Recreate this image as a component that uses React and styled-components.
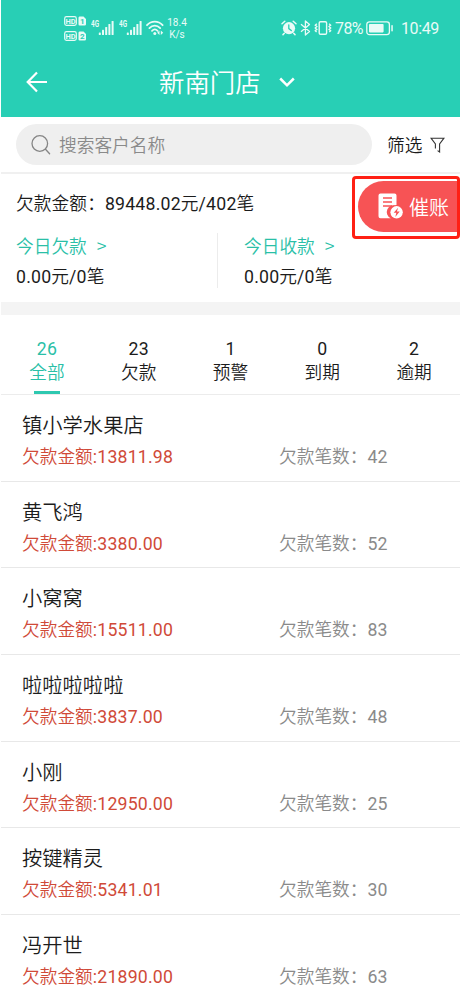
import React from "react";
import styled, { createGlobalStyle } from "styled-components";

const tabs = [
  { count: 26, label: "全部" },
  { count: 23, label: "欠款" },
  { count: 1, label: "预警" },
  { count: 0, label: "到期" },
  { count: 2, label: "逾期" },
];

const customers = [
  { name: "镇小学水果店", amount: "13811.98", bills: 42 },
  { name: "黄飞鸿", amount: "3380.00", bills: 52 },
  { name: "小窝窝", amount: "15511.00", bills: 83 },
  { name: "啦啦啦啦啦", amount: "3837.00", bills: 48 },
  { name: "小刚", amount: "12950.00", bills: 25 },
  { name: "按键精灵", amount: "5341.01", bills: 30 },
  { name: "冯开世", amount: "21890.00", bills: 63 },
];

const HdIcon = ({ sim }) => (
  <svg width="23" height="10" viewBox="0 0 23 10">
    <rect x="0.7" y="0.7" width="11.6" height="8.6" rx="1.8" fill="none" stroke="#e9fbf7" strokeWidth="1.2" />
    <text x="6.5" y="7.7" textAnchor="middle" fontSize="7.5" fontWeight="700" fill="#e9fbf7">
      HD
    </text>
    <path d="M15.5 0.5h4l2.5 2.5v5.2a1.3 1.3 0 0 1-1.3 1.3h-5a1.2 1.2 0 0 1-1.2-1.3V1.7a1.2 1.2 0 0 1 1-1.2z" fill="#e9fbf7" />
    <text x="18.2" y="8" textAnchor="middle" fontSize="8" fontWeight="700" fill="#28cfb5">
      {sim}
    </text>
  </svg>
);

const SignalIcon = () => (
  <svg width="24" height="18" viewBox="0 0 24 18" fill="#e9fbf7">
    <text x="0" y="7.5" fontSize="8.5" fontWeight="700" textLength="8" lengthAdjust="spacingAndGlyphs">
      4G
    </text>
    <rect x="7.8" y="13.5" width="2" height="2.5" rx="0.6" />
    <rect x="11" y="10.7" width="2" height="5.3" rx="0.6" />
    <rect x="14.2" y="8" width="2" height="8" rx="0.6" />
    <rect x="17.4" y="5" width="2" height="11" rx="0.6" />
    <rect x="20.6" y="2" width="2" height="14" rx="0.6" />
  </svg>
);

const WifiIcon = () => (
  <svg width="18" height="16" viewBox="0 0 18 16" fill="none" stroke="#e9fbf7" strokeWidth="1.8" strokeLinecap="round">
    <path d="M1 5.2C5.3 0.4 12.3 0.4 16.6 5.2" />
    <path d="M3.4 8.1C6.6 4.7 11 4.7 14.2 8.1" />
    <path d="M6 10.8C7.7 9.1 9.9 9.1 11.6 10.8" />
    <circle cx="8.8" cy="13.4" r="1.5" fill="#e9fbf7" stroke="none" />
    <path d="M13.5 10.6v4.4L11.2 12.8zM14.8 10.6v4.4L17.2 12.8z" fill="#e9fbf7" stroke="none" />
  </svg>
);

const AlarmIcon = () => (
  <svg width="16" height="16" viewBox="0 0 16 16" fill="none" stroke="#e9fbf7" strokeLinecap="round">
    <circle cx="8" cy="8.2" r="6.1" fill="#e9fbf7" stroke="none" />
    <path d="M1 3.7L3.8 1.2M15 3.7L12.2 1.2M3.3 13.3L2 14.6M12.7 13.3L14 14.6" strokeWidth="1.5" />
    <path d="M7.8 4.8v3.8l2.5 2" stroke="#28cfb5" strokeWidth="1.3" />
  </svg>
);

const BluetoothIcon = () => (
  <svg width="11" height="16" viewBox="0 0 11 16" fill="none" stroke="#e9fbf7" strokeWidth="1.3" strokeLinejoin="round">
    <path d="M1 4.3L9.5 11.6L5.4 15V1L9.5 4.4L1 11.7" />
  </svg>
);

const VibrateIcon = () => (
  <svg width="18" height="16" viewBox="0 0 18 16" fill="none" stroke="#e9fbf7" strokeWidth="1.4">
    <rect x="5.2" y="1.7" width="7.4" height="12.6" rx="1.3" />
    <path d="M2.8 3.8l-1.5 1.4l1.5 1.4l-1.5 1.4l1.5 1.4l-1.5 1.4l1.3 1.2M15.1 3.8l1.5 1.4l-1.5 1.4l1.5 1.4l-1.5 1.4l1.5 1.4l-1.3 1.2" />
  </svg>
);

const BatteryIcon = () => (
  <svg width="28" height="15" viewBox="0 0 28 15">
    <rect x="0.8" y="0.8" width="22.6" height="12.8" rx="2.6" fill="none" stroke="#e9fbf7" strokeWidth="1.3" />
    <rect x="3" y="3" width="14.6" height="8.4" rx="0.8" fill="#e9fbf7" />
    <rect x="25.3" y="4" width="1.5" height="6.4" rx="0.7" fill="#e9fbf7" />
  </svg>
);

const Money = ({ amount, bills }) => (
  <span>
    <Figures>{amount}</Figures>元<Figures>/{bills}</Figures>笔
  </span>
);

const App = () => {
  return (
    <>
      <GlobalStyle />
      <Page>
        <Header>
          <StatusBar>
            <HdStack>
              <HdIcon sim="1" />
              <HdIcon sim="2" />
            </HdStack>
            <Signals>
              <SignalIcon />
              <SignalIcon />
            </Signals>
            <WifiIcon />
            <Speed>
              <span>18.4</span>
              <span>K/s</span>
            </Speed>
            <StatusRight>
              <AlarmIcon />
              <BluetoothIcon />
              <VibrateIcon />
              <Percent>78%</Percent>
              <BatteryIcon />
              <Clock>10:49</Clock>
            </StatusRight>
          </StatusBar>
          <TitleBar>
            <svg width="22" height="22" viewBox="0 0 22 22" fill="none" stroke="#fff" strokeWidth="2.2">
              <path d="M11 1.5L1.7 11L11 20.5M1.7 11H21" />
            </svg>
            <Title>新南门店</Title>
            <svg width="16" height="11" viewBox="0 0 16 11" fill="none" stroke="#fff" strokeWidth="2.5">
              <path d="M1.2 1.5L8 8.3L14.8 1.5" />
            </svg>
          </TitleBar>
        </Header>
        <SearchRow>
          <SearchBox>
            <svg width="20" height="21" viewBox="0 0 20 21" fill="none" stroke="#858585" strokeWidth="1.3">
              <circle cx="8.8" cy="9.5" r="7.8" />
              <path d="M14.5 15.3L18.6 19.8" strokeLinecap="round" />
            </svg>
            <SearchHint>搜索客户名称</SearchHint>
          </SearchBox>
          <Filter>
            <span>筛选</span>
            <svg width="15" height="16" viewBox="0 0 15 16" fill="none" stroke="#333" strokeWidth="1.1">
              <path d="M5.4 11.5V7L1 1.2H14L9.6 7V15L7.6 13.6" />
            </svg>
          </Filter>
        </SearchRow>
        <Summary>
          <Total>
            欠款金额：
            <Money amount="89448.02" bills="402" />
          </Total>
          <Today>
            <TodayItem>
              <TodayLink>
                今日欠款<i>&gt;</i>
              </TodayLink>
              <Money amount="0.00" bills="0" />
            </TodayItem>
            <TodayItem $divided>
              <TodayLink>
                今日收款<i>&gt;</i>
              </TodayLink>
              <Money amount="0.00" bills="0" />
            </TodayItem>
          </Today>
          <Highlight>
            <DunButton>
              <svg width="26" height="27" viewBox="0 0 26 27">
                <path d="M2.5 0.5h14a2 2 0 0 1 2 2v10.3a6.8 6.8 0 0 0-5.7 12.5H2.5a2 2 0 0 1-2-2V2.5a2 2 0 0 1 2-2z" fill="#fff" />
                <path d="M5 5h9M5 9h9M5 13h9" stroke="#f75355" strokeWidth="1.5" />
                <circle cx="18.6" cy="19.3" r="7.4" fill="#f75355" />
                <circle cx="18.6" cy="19.3" r="6.2" fill="#fff" />
                <path d="M20.1 14.8L15.7 19.8h2.6l-1 4.2l4.4-5.4h-2.8z" fill="#f75355" />
              </svg>
              <span>催账</span>
            </DunButton>
          </Highlight>
        </Summary>
        <Tabs>
          {tabs.map((tab, index) => (
            <Tab key={tab.label} $active={index === 0}>
              <Figures>{tab.count}</Figures>
              <span>{tab.label}</span>
            </Tab>
          ))}
        </Tabs>
        {customers.map((customer) => (
          <Customer key={customer.name}>
            <Name>{customer.name}</Name>
            <Details>
              <Amount>
                欠款金额<Figures>:{customer.amount}</Figures>
              </Amount>
              <Bills>
                欠款笔数：<Figures>{customer.bills}</Figures>
              </Bills>
            </Details>
          </Customer>
        ))}
      </Page>
    </>
  );
};

const GlobalStyle = createGlobalStyle`
  * {
    box-sizing: border-box;
  }
  body {
    margin: 0;
    background: #fff;
    overflow: hidden;
    font-family: Roboto, "Noto Sans CJK SC", sans-serif;
    font-weight: 350;
  }
  svg {
    display: block;
    flex-shrink: 0;
  }
`;

const Page = styled.main`
  width: 460px;
  height: 992px;
  padding-left: 1px;
  overflow: hidden;
  font-size: 17.7px;
  line-height: 26px;
  color: #1c1c1c;
  white-space: nowrap;
`;

const Header = styled.header`
  height: 117px;
  background: #28cfb5;
  color: #fff;
`;

const StatusBar = styled.div`
  display: flex;
  align-items: center;
  height: 56px;
  padding: 0 21px 0 63px;
  color: #e9fbf7;
  font-weight: 400;
`;

const HdStack = styled.div`
  display: flex;
  flex-direction: column;
  gap: 5px;
`;

const Signals = styled.div`
  display: flex;
  gap: 4px;
  margin: 0 3px 0 4px;
`;

const Speed = styled.div`
  display: flex;
  flex-direction: column;
  align-items: center;
  width: 20px;
  margin-left: 3px;
  padding-top: 1px;
  font-size: 10px;
  line-height: 12px;
`;

const StatusRight = styled.div`
  display: flex;
  align-items: center;
  margin-left: auto;
  gap: 3px;
`;

const Percent = styled.span`
  width: 28px;
  padding-top: 2px;
  font-size: 16px;
  letter-spacing: -0.6px;
`;

const Clock = styled.span`
  width: 38px;
  margin-left: 4px;
  padding-top: 2px;
  font-size: 16px;
  letter-spacing: -0.4px;
`;

const TitleBar = styled.div`
  display: flex;
  align-items: center;
  height: 52px;
  padding-left: 25px;
`;

const Title = styled.h1`
  margin: 0 18px 0 111px;
  padding-top: 2px;
  font-size: 25.4px;
  font-weight: 350;
  line-height: 38px;
`;

const SearchRow = styled.div`
  display: flex;
  align-items: center;
  height: 57px;
  padding-left: 15px;
  border-bottom: 2px solid #f0f0f0;
`;

const SearchBox = styled.div`
  display: flex;
  align-items: center;
  gap: 8px;
  width: 356px;
  height: 41px;
  padding-left: 15px;
  border-radius: 21px;
  background: #efefef;
  color: #8a8a8a;
`;

const SearchHint = styled.span`
  padding-top: 3px;
`;

const Filter = styled.div`
  display: flex;
  align-items: center;
  gap: 8px;
  margin-left: 15px;
  span {
    padding-top: 3px;
  }
`;

const Summary = styled.section`
  position: relative;
  height: 141px;
  padding: 17px 0 0 15px;
  border-bottom: 13px solid #f4f4f4;
`;

const Figures = styled.span`
  font-weight: 400;
  letter-spacing: 0.2px;
`;

const Total = styled.div`
  height: 42px;
  letter-spacing: 0.1px;
`;

const Today = styled.div`
  display: flex;
`;

const TodayItem = styled.div`
  display: flex;
  flex-direction: column;
  gap: 4px;
  width: ${(props) => (props.$divided ? "135px" : "201px")};
  height: 55px;
  padding-top: 1px;
  padding-left: ${(props) => (props.$divided ? "26px" : "0")};
  border-left: ${(props) => (props.$divided ? "1px solid #ececec" : "0")};
`;

const TodayLink = styled.span`
  height: 26px;
  color: #2abfa7;
  i {
    margin-left: 10px;
    font-family: "Noto Sans CJK SC", sans-serif;
    font-style: normal;
    line-height: 1;
  }
`;

/* red frame laid over the collect button */
const Highlight = styled.div`
  position: absolute;
  top: 2px;
  right: 0;
  width: 108px;
  height: 63px;
  padding: 2px 0 0 3px;
  border: 3px solid #ff2014;
  border-radius: 4px;
  background: #fff;
`;

const DunButton = styled.div`
  display: flex;
  align-items: center;
  gap: 5px;
  height: 51px;
  padding-left: 20px;
  border-radius: 26px 0 0 26px;
  background: #f75355;
  color: #fff;
  font-size: 20px;
  span {
    padding-top: 2px;
  }
`;

const Tabs = styled.nav`
  display: flex;
  height: 80px;
  padding-top: 22px;
  border-bottom: 1px solid #ececec;
`;

const Tab = styled.div`
  display: flex;
  flex: 1;
  flex-direction: column;
  align-items: center;
  line-height: 24px;
  color: ${(props) => (props.$active ? "#2abfa7" : "#1c1c1c")};
  &::after {
    content: "";
    width: 26px;
    height: 3px;
    margin-top: 6px;
    background: ${(props) => (props.$active ? "#2ec8b0" : "transparent")};
  }
`;

const Customer = styled.article`
  height: 86.7px;
  padding: 16px 0 0 21px;
  border-bottom: 1px solid #e8e8e8;
`;

const Name = styled.div`
  font-size: 20.3px;
  line-height: 30px;
`;

const Details = styled.div`
  display: flex;
  line-height: 32px;
`;

const Amount = styled.span`
  width: 257px;
  color: #d04a38;
`;

const Bills = styled.span`
  color: #8a8a8a;
`;

export default App;
